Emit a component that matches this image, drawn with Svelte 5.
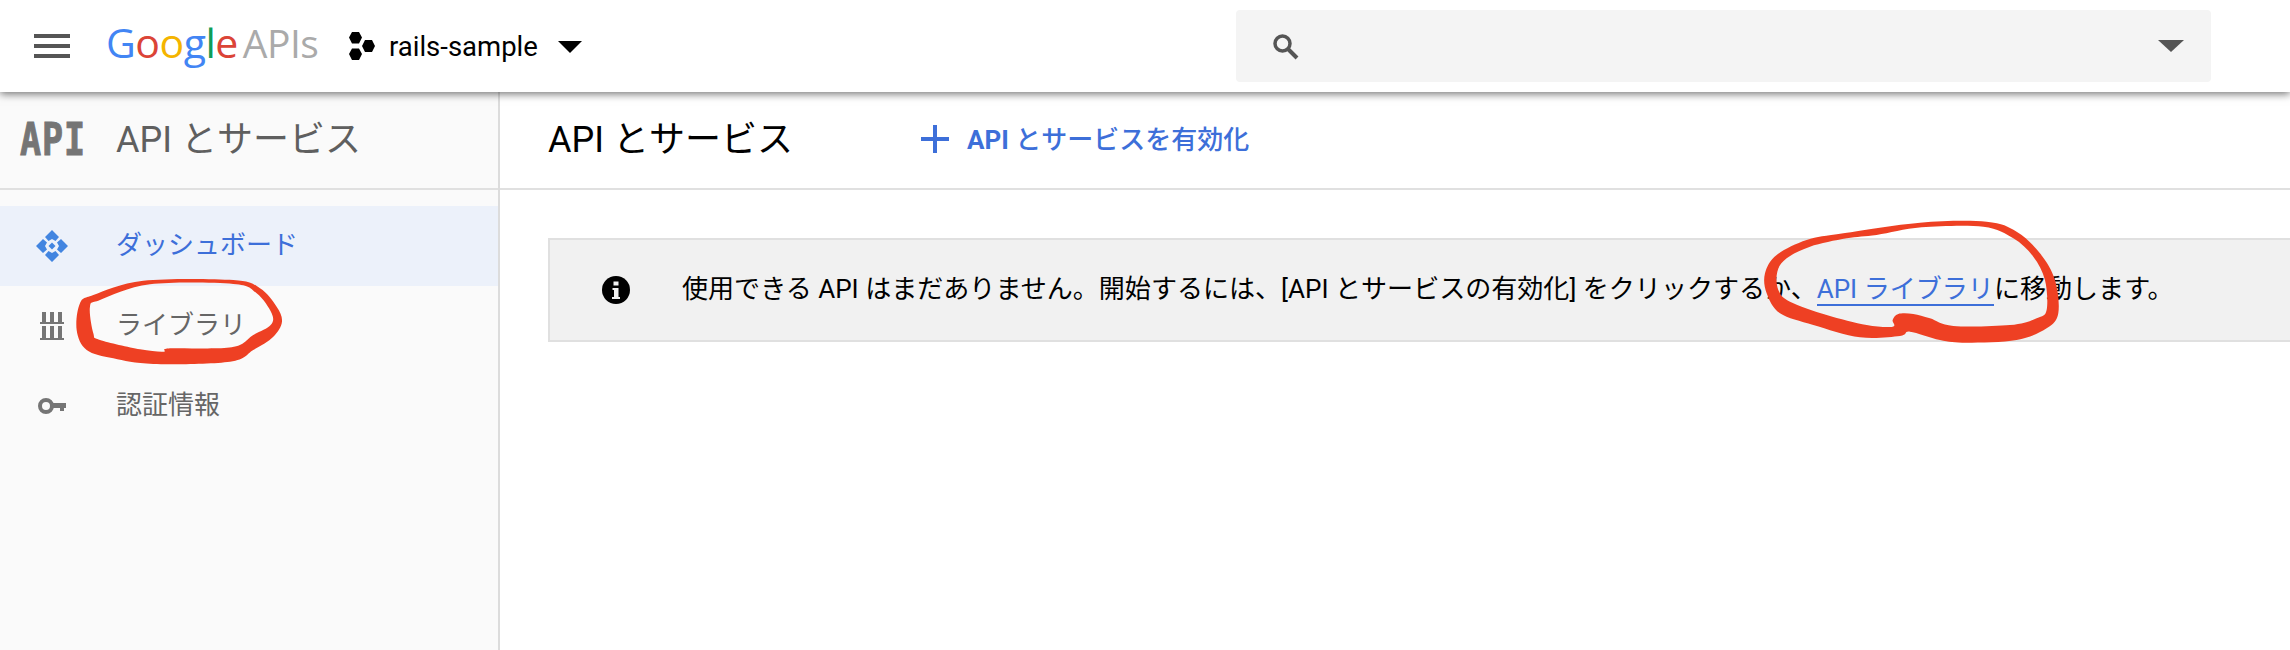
<script>
  const navItems = [
    { label: 'ダッシュボード', icon: 'dash', active: true },
    { label: 'ライブラリ', icon: 'lib' },
    { label: '認証情報', icon: 'key' }
  ];

  // closed smooth curve through hand-traced points (catmull-rom)
  function smooth(pts) {
    const n = pts.length;
    let d = `M${pts[0][0]} ${pts[0][1]}`;
    for (let i = 0; i < n; i++) {
      const p0 = pts[(i - 1 + n) % n], p1 = pts[i], p2 = pts[(i + 1) % n], p3 = pts[(i + 2) % n];
      const c1 = [p1[0] + (p2[0] - p0[0]) / 6, p1[1] + (p2[1] - p0[1]) / 6];
      const c2 = [p2[0] - (p3[0] - p1[0]) / 6, p2[1] - (p3[1] - p1[1]) / 6];
      d += `C${c1[0]} ${c1[1]} ${c2[0]} ${c2[1]} ${p2[0]} ${p2[1]}`;
    }
    return d + 'Z';
  }

  const leftOuter = [[430,272],[700,270],[780,295],[830,350],[846,395],[820,440],[760,480],[690,515],[460,522],[340,505],[260,480],[230,420],[240,340],[280,315]];
  const leftInner = [[450,283],[700,282],[770,310],[815,370],[812,405],[760,435],[695,472],[510,475],[490,485],[420,478],[300,450],[280,430],[270,350],[300,330]];
  const rightOuter = [[660,68],[860,65],[950,95],[1020,160],[1065,240],[1075,340],[1040,385],[950,420],[800,428],[720,420],[630,395],[600,408],[480,412],[340,375],[240,340],[200,280],[195,220],[230,165],[320,120],[430,100]];
  const rightInner = [[665,82],[850,80],[940,115],[1000,170],[1035,240],[1040,330],[1010,355],[930,375],[760,378],[690,355],[640,342],[595,342],[578,360],[578,380],[500,375],[380,345],[270,305],[235,270],[232,215],[260,175],[330,140],[440,115],[530,105]];
</script>

<div class="page">
  <header class="topbar">
    <div class="menu"><span></span><span></span><span></span></div>
    <div class="logo">
      <span class="g-blue">G</span><span class="g-red">o</span><span class="g-yellow">o</span><span class="g-blue">g</span><span class="g-green">l</span><span class="g-red">e</span>
      <span class="apis">APIs</span>
    </div>
    <div class="project">
      <svg width="26" height="28" viewBox="0 0 26 28">
        <path d="M3 0h7l3 5.500-3 6H3l-3-6z M16 8h7l3 6-3 6h-7l-3-6z M3 16.500h7l3 5.500-3 6H3l-3-6z" fill="#000"/>
      </svg>
      <span class="project-name">rails-sample</span>
      <span class="caret"></span>
    </div>
    <div class="search">
      <svg width="27" height="27" viewBox="0 0 27 27">
        <circle cx="10.500" cy="10.500" r="7.500" fill="none" stroke="#555" stroke-width="3.500"/>
        <path d="M16 16l9 9" stroke="#555" stroke-width="4"/>
      </svg>
      <span class="search-caret"></span>
    </div>
  </header>

  <div class="body">
    <aside class="sidebar">
      <div class="side-head">
        <span class="api-icon"><span>API</span></span>
        <span class="side-title">API とサービス</span>
      </div>
      <nav class="nav">
        {#each navItems as item}
          <div class="nav-item" class:active={item.active}>
            <span class="nav-icon">
              {#if item.icon === 'dash'}
                <svg width="32" height="32" viewBox="0 0 32 32" fill="#4285e0">
                  <path d="M16 0l7 7-3.500 4-3.500-2-3.500 2-3.500-4z"/>
                  <path d="M16 32l7-7-3.500-4-3.500 2-3.500-2-3.500 4z"/>
                  <path d="M0 16l7-7 4 3.500-2 3.500 2 3.500-4 3.500z"/>
                  <path d="M32 16l-7-7-4 3.500 2 3.500-2 3.500 4 3.500z"/>
                  <path d="M16 12.500l3.500 3.500-3.500 3.500-3.500-3.500z"/>
                </svg>
              {:else if item.icon === 'lib'}
                <svg width="24" height="28" viewBox="0 0 24 28" fill="#757575">
                  <path d="M0 10h24v2H0z M0 26h24v2H0z M2 0h4v10H2z M10 0h4v10h-4z M18 0h4v10h-4z M2 14h4v12H2z M10 14h4v12h-4z M18 14h4v12h-4z"/>
                </svg>
              {:else}
                <svg width="28" height="16" viewBox="0 0 28 16">
                  <circle cx="8" cy="8" r="6" fill="none" stroke="#757575" stroke-width="4"/>
                  <path d="M14 5h14v5h-2v3h-4v-3h-8z" fill="#757575"/>
                </svg>
              {/if}
            </span>
            <span class="nav-label">{item.label}</span>
          </div>
        {/each}
      </nav>
    </aside>

    <main class="main">
      <div class="sub-head">
        <h1 class="title">API とサービス</h1>
        <div class="enable">
          <svg width="28" height="28" viewBox="0 0 28 28"><path d="M12 0h4v12h12v4H16v12h-4V16H0v-4h12z" fill="#3d6fd9"/></svg>
          <span class="enable-label"><b>API</b> とサービスを有効化</span>
        </div>
      </div>
      <div class="content">
        <div class="notice">
          <svg width="28" height="28" viewBox="0 0 28 28">
            <circle cx="14" cy="14" r="14" fill="#000"/>
            <path d="M11.500 5.500h5v4h-5z M10.500 12h6v9h1.500v2h-8v-2h2v-7h-1.500z" fill="#f1f1f1"/>
          </svg>
          <p class="notice-text">使用できる API はまだありません。開始するには、[API とサービスの有効化] をクリックするか、<span class="link">API ライブラリ</span>に移動します。</p>
        </div>
      </div>
    </main>
  </div>

  <svg class="marks" width="2290" height="650" viewBox="0 0 2290 650">
    <path transform="translate(0 190) scale(0.3333)" fill-rule="evenodd" fill="#ee4023" d={smooth(leftOuter) + smooth(leftInner)}/>
    <path transform="translate(1700 200) scale(0.3333)" fill-rule="evenodd" fill="#ee4023" d={smooth(rightOuter) + smooth(rightInner)}/>
  </svg>
</div>

<style>
  :global(body) {
    margin: 0;
    background: #fff;
  }
  .page {
    position: relative;
    width: 2290px;
    height: 650px;
    overflow: hidden;
    font-family: Roboto, "Noto Sans CJK JP", sans-serif;
    color: #000;
  }
  .topbar {
    position: relative;
    z-index: 2;
    display: flex;
    align-items: center;
    height: 92px;
    background: #fff;
    box-shadow: 0 2px 8px rgba(0, 0, 0, 0.55);
  }
  .menu {
    display: flex;
    flex-direction: column;
    justify-content: space-between;
    width: 36px;
    height: 24px;
    margin-left: 34px;
  }
  .menu span {
    display: block;
    height: 4px;
    background: #555;
  }
  .logo {
    display: flex;
    align-items: baseline;
    width: 211px;
    margin-left: 36px;
    margin-top: -8px;
    font-family: "Open Sans", sans-serif;
    font-size: 41px;
    letter-spacing: -0.5px;
    white-space: nowrap;
  }
  .g-blue { color: #4285f4; }
  .g-red { color: #db4437; }
  .g-yellow { color: #f4b400; }
  .g-green { color: #0f9d58; }
  .apis {
    margin-left: 5px;
    color: #aaa;
    font-size: 39px;
    letter-spacing: -0.5px;
  }
  .project {
    display: flex;
    align-items: center;
    margin-left: 32px;
  }
  .project-name {
    margin-left: 14px;
    font-size: 27.500px;
  }
  .caret {
    width: 0;
    height: 0;
    margin-left: 20px;
    margin-top: 2px;
    border-left: 12px solid transparent;
    border-right: 12px solid transparent;
    border-top: 12px solid #000;
  }
  .search {
    display: flex;
    align-items: center;
    justify-content: space-between;
    box-sizing: border-box;
    width: 975px;
    height: 72px;
    margin-left: auto;
    margin-right: 79px;
    padding: 0 27px 0 36px;
    background: #f4f4f4;
    border-radius: 4px;
  }
  .search-caret {
    width: 0;
    height: 0;
    border-left: 13px solid transparent;
    border-right: 13px solid transparent;
    border-top: 12px solid #555;
  }
  .body {
    display: flex;
    height: 558px;
  }
  .sidebar {
    flex: none;
    box-sizing: border-box;
    width: 500px;
    background: #fafafa;
    border-right: 2px solid #dcdcdc;
  }
  .side-head {
    display: flex;
    align-items: center;
    box-sizing: border-box;
    height: 98px;
    padding-left: 22px;
    border-bottom: 2px solid #e0e0e0;
  }
  .api-icon {
    display: flex;
    justify-content: center;
    width: 62px;
    color: #757575;
    font-family: "DejaVu Sans Mono", monospace;
    font-weight: 700;
    font-size: 35px;
    line-height: 32px;
    letter-spacing: 1px;
    transform: scaleY(1.25);
    -webkit-text-stroke: 0.8px #757575;
  }
  .side-title {
    margin-left: 32px;
    margin-top: -8px;
    font-size: 36px;
    color: #5f5f5f;
  }
  .nav {
    padding-top: 16px;
  }
  .nav-item {
    display: flex;
    align-items: center;
    height: 80px;
    color: #666;
    font-size: 26px;
  }
  .nav-item.active {
    background: #ecf1fa;
    color: #3d6fd9;
  }
  .nav-icon {
    display: flex;
    align-items: center;
    justify-content: center;
    width: 104px;
    margin-right: 12px;
  }
  .nav-label {
    margin-top: -8px;
  }
  .main {
    flex: 1;
    min-width: 0;
  }
  .sub-head {
    display: flex;
    align-items: center;
    box-sizing: border-box;
    height: 98px;
    padding-left: 48px;
    border-bottom: 2px solid #e0e0e0;
  }
  .title {
    margin: -8px 0 0;
    font-size: 36px;
    font-weight: 400;
  }
  .enable {
    display: flex;
    align-items: center;
    margin-left: 128px;
    margin-top: -3px;
    color: #3d6fd9;
    font-size: 26px;
    font-weight: 500;
  }
  .enable-label {
    margin-left: 18px;
    margin-top: -2px;
  }
  .enable-label b {
    font-weight: 700;
  }
  .content {
    padding: 48px 0 0 48px;
  }
  .notice {
    display: flex;
    align-items: center;
    box-sizing: border-box;
    width: 1800px;
    height: 104px;
    padding-left: 52px;
    background: #f1f1f1;
    border: 2px solid #e0e0e0;
  }
  .notice-text {
    margin: -6px 0 0 52px;
    font-size: 26.050px;
    white-space: nowrap;
  }
  .link {
    color: #3d6fd9;
    border-bottom: 2px solid #3d6fd9;
  }
  .marks {
    position: absolute;
    top: 0;
    left: 0;
    z-index: 3;
    pointer-events: none;
  }
</style>
